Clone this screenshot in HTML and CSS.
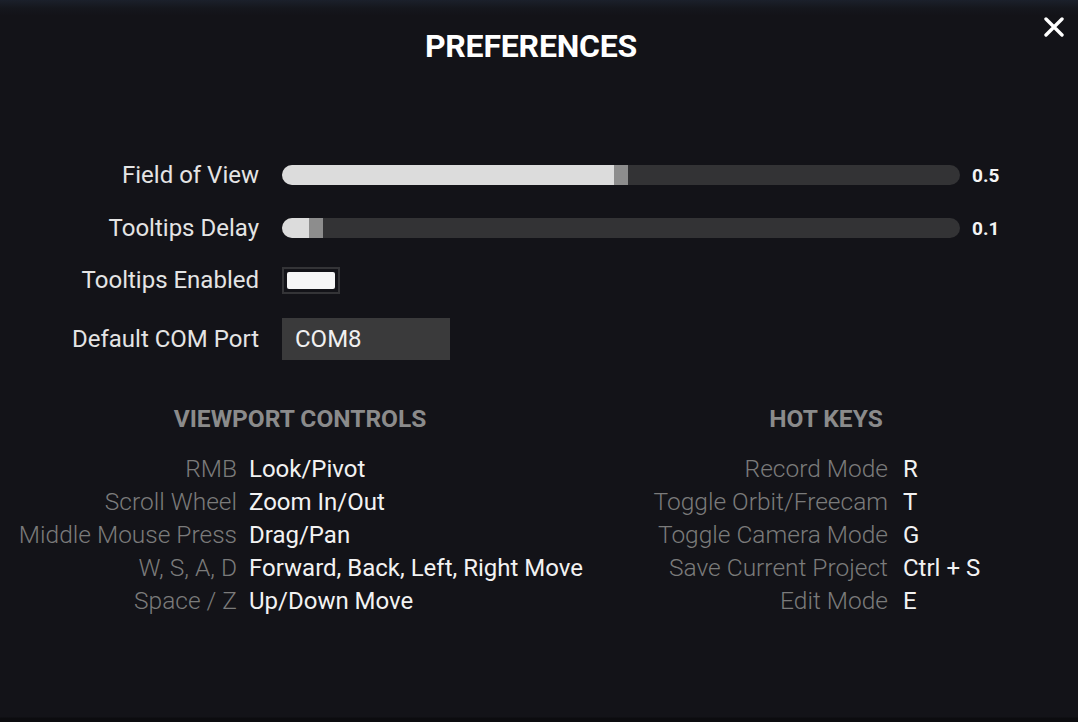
FILE: index.html
```html
<!DOCTYPE html>
<html lang="en">
<head>
<meta charset="utf-8">
<title>Preferences</title>
<link rel="stylesheet" href="styles.css">
</head>
<body>
<div class="panel">
  <header class="head">
    <h1 class="title">PREFERENCES</h1>
    <button class="close" aria-label="Close">
      <svg width="20" height="20" viewBox="0 0 20 20"><path d="M2 2 L18 18 M18 2 L2 18" stroke="#ffffff" stroke-width="3.4" stroke-linecap="round"/></svg>
    </button>
  </header>

  <section class="settings">
    <div class="row r1">
      <span class="label">Field of View</span>
      <div class="slider"><div class="fill" style="width:332px"></div><div class="handle"></div></div>
      <span class="value">0.5</span>
    </div>
    <div class="row r2">
      <span class="label">Tooltips Delay</span>
      <div class="slider"><div class="fill" style="width:27px"></div><div class="handle"></div></div>
      <span class="value">0.1</span>
    </div>
    <div class="row r3">
      <span class="label">Tooltips Enabled</span>
      <div class="check"><div class="check-on"></div></div>
    </div>
    <div class="row r4">
      <span class="label">Default COM Port</span>
      <div class="field">COM8</div>
    </div>
  </section>

  <section class="help">
    <div class="group left">
      <h2 class="group-title">VIEWPORT CONTROLS</h2>
      <span class="key">RMB</span><span class="act">Look/Pivot</span>
      <span class="key">Scroll Wheel</span><span class="act">Zoom In/Out</span>
      <span class="key">Middle Mouse Press</span><span class="act">Drag/Pan</span>
      <span class="key">W, S, A, D</span><span class="act">Forward, Back, Left, Right Move</span>
      <span class="key">Space / Z</span><span class="act">Up/Down Move</span>
    </div>
    <div class="group right">
      <h2 class="group-title">HOT KEYS</h2>
      <span class="key">Record Mode</span><span class="act">R</span>
      <span class="key">Toggle Orbit/Freecam</span><span class="act">T</span>
      <span class="key">Toggle Camera Mode</span><span class="act">G</span>
      <span class="key">Save Current Project</span><span class="act">Ctrl + S</span>
      <span class="key">Edit Mode</span><span class="act">E</span>
    </div>
  </section>
</div>
</body>
</html>
```

FILE: styles.css
```css
* { box-sizing: border-box; }
html, body { margin: 0; padding: 0; }
body {
  width: 1078px;
  height: 722px;
  overflow: hidden;
  background: #131318;
  font-family: Roboto, "Liberation Sans", sans-serif;
  color: #e8e8e8;
}
.panel {
  position: relative;
  height: 722px;
  background: linear-gradient(to bottom, #1b202b 0px, #15171d 8px, #131318 16px, #131318 717px, #0c0c0f 718px);
}
.head {
  height: 92px;
  padding-top: 27px;
  text-align: center;
}
.title {
  margin: 0;
  font-size: 32px;
  font-weight: 700;
  line-height: 38px;
  color: #ffffff;
  letter-spacing: -0.2px;
  padding-right: 16px;
}
.close {
  position: absolute;
  top: 17px;
  left: 1044px;
  width: 20px;
  height: 20px;
  padding: 0;
  border: 0;
  background: none;
  display: block;
}
.close svg { display: block; }

.settings {
  padding-top: 63px;
}
.row {
  display: flex;
  align-items: center;
  height: 40px;
}
.r2 { margin-top: 13px; }
.r3 { margin-top: 12px; }
.r4 { margin-top: 18px; height: 42px; }
.label {
  width: 259px;
  text-align: right;
  font-size: 24px;
  font-weight: 400;
  color: #e4e4e4;
  margin-right: 23px;
}
.slider {
  width: 678px;
  height: 20px;
  border-radius: 10px;
  background: #333335;
  display: flex;
  overflow: hidden;
}
.fill {
  height: 20px;
  background: #dcdcdc;
}
.handle {
  width: 14px;
  height: 20px;
  background: #8d8d8d;
}
.value {
  margin-left: 12px;
  font-size: 19px;
  font-weight: 700;
  color: #f4f4f4;
}
.check {
  width: 58px;
  height: 27px;
  border: 2px solid #343437;
  padding: 3px;
}
.check-on {
  width: 100%;
  height: 100%;
  background: #f6f6f6;
  border-radius: 2px;
}
.field {
  width: 168px;
  height: 42px;
  background: #3a3a3b;
  padding-left: 13px;
  font-size: 24px;
  line-height: 42px;
  color: #f0f0f0;
}

.help {
  display: flex;
  margin-top: 42px;
}
.group {
  display: grid;
  grid-template-rows: 50px;
  grid-auto-rows: 33px;
  align-items: center;
}
.left {
  width: 600px;
  grid-template-columns: 237px 1fr;
  column-gap: 12px;
}
.right {
  width: 452px;
  grid-template-columns: 288px 1fr;
  column-gap: 15px;
}
.group-title {
  grid-column: 1 / -1;
  align-self: start;
  margin: 0;
  text-align: center;
  font-size: 24.5px;
  font-weight: 700;
  color: #8b8b8b;
  line-height: 33px;
}
.key {
  text-align: right;
  font-size: 24.5px;
  font-weight: 300;
  color: #7b7b7b;
  white-space: nowrap;
}
.act {
  font-size: 24px;
  font-weight: 400;
  color: #f2f2f2;
  white-space: nowrap;
}
```
